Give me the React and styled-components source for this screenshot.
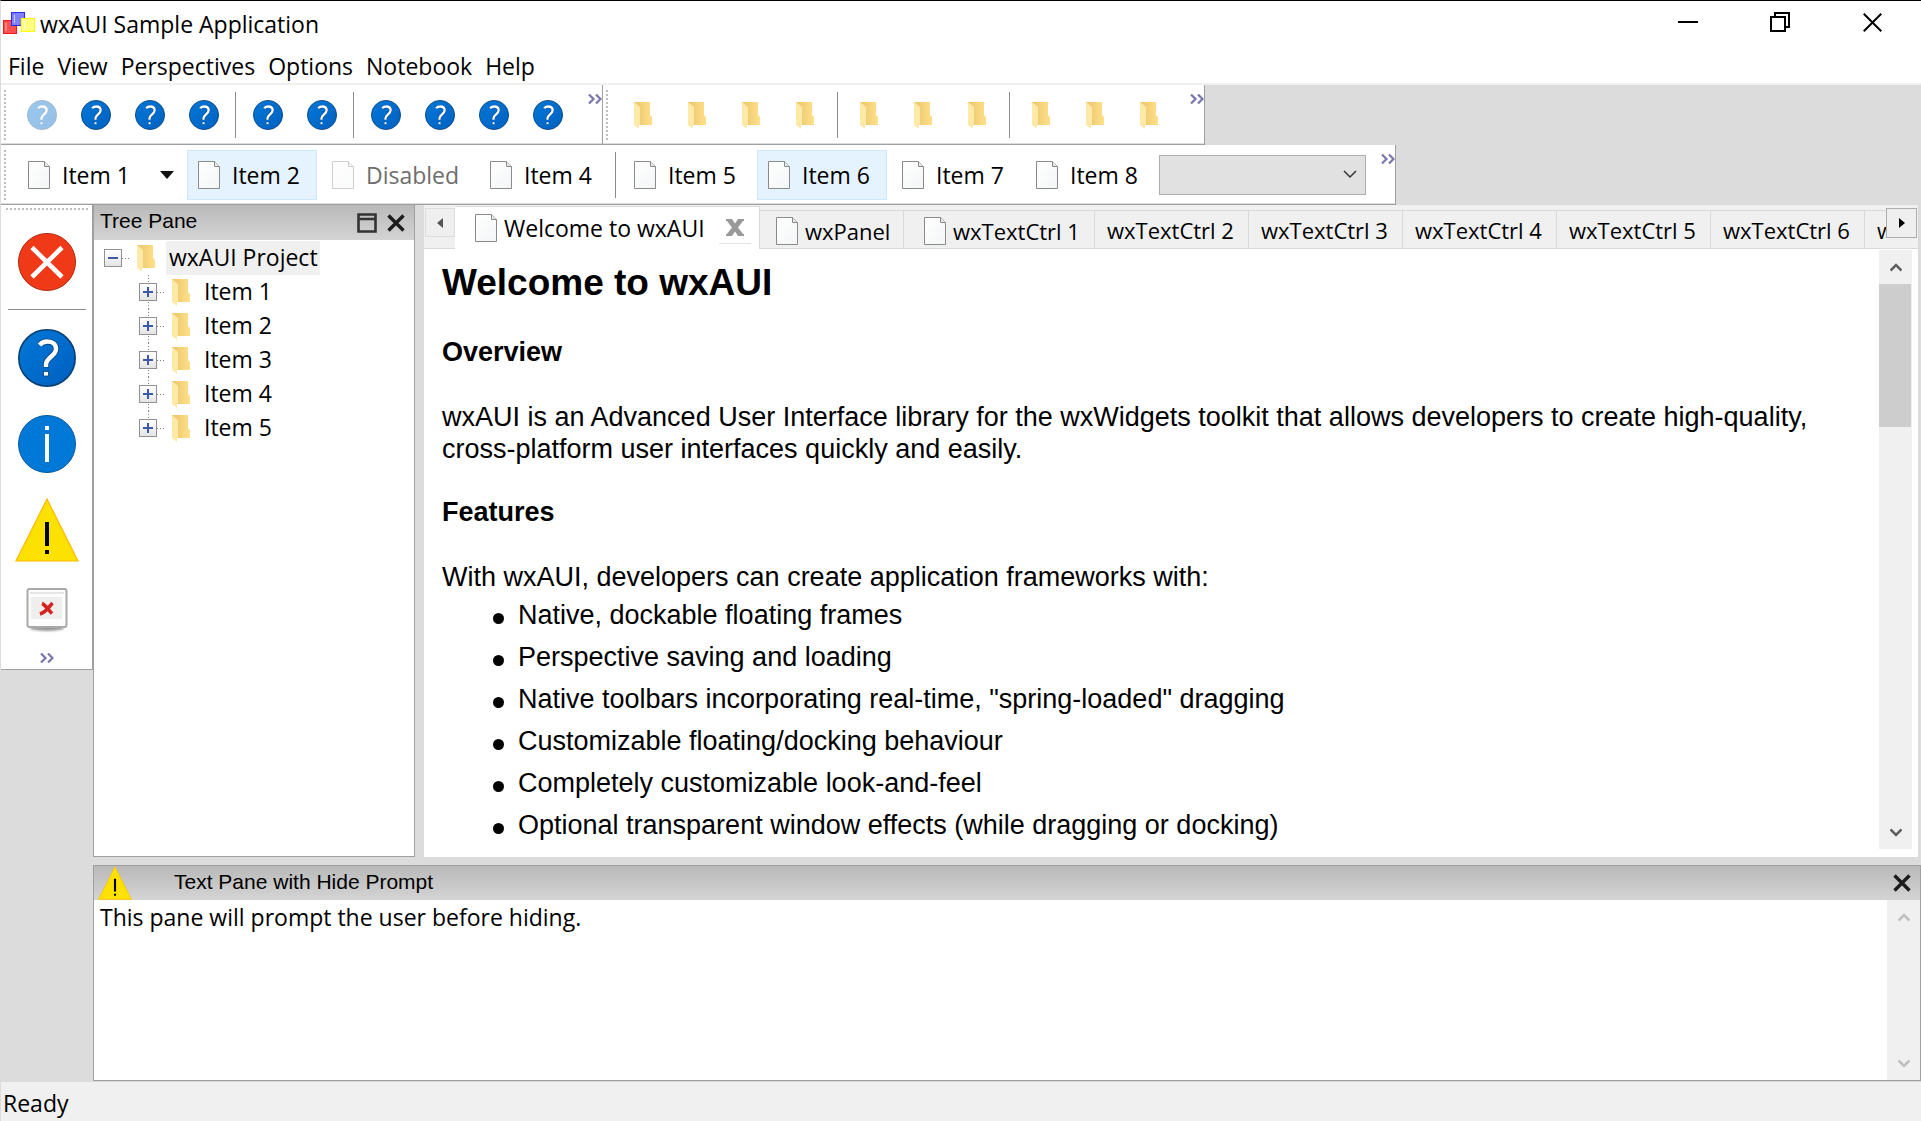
import React from "react";
import styled, { createGlobalStyle, css } from "styled-components";

const UI = `"Open Sans", "Noto Sans", sans-serif`;
const ARIAL = `"Liberation Sans", Arial, sans-serif`;

const GlobalStyle = createGlobalStyle`
  * { box-sizing: border-box; }
  body { margin: 0; background: #fff; color: #000; font-family: ${UI}; font-size: 23px; line-height: 32px; }
  button, select, textarea { font: inherit; color: inherit; }
  button { padding: 0; margin: 0; border: 0; background: none; }
  svg { display: block; flex: none; }
`;

const Window = styled.div`
  display: flex;
  flex-direction: column;
  height: 100vh;
  overflow: hidden;
  border-top: 1px solid #000;
  border-left: 1px solid #dcdcdc;
`;

const TitleBar = styled.header`
  display: flex;
  align-items: center;
  height: 48px;
  flex: none;
  padding: 0 3px 2px 2px;
`;

const AppTitle = styled.h1`
  margin: 0 0 0 4px;
  font-size: 23px;
  font-weight: 400;
  flex: 1;
`;

const CaptionButton = styled.button`
  display: flex;
  justify-content: center;
  width: 92px;
  height: 42px;
  align-self: flex-start;
  align-items: center;
`;

const MenuBar = styled.nav`
  display: flex;
  align-items: center;
  gap: 13px;
  height: 36px;
  flex: none;
  padding-left: 7px;
  border-bottom: 2px solid #f0f0f0;
`;

const DockRow = styled.div`
  display: flex;
  flex: none;
  height: 60px;
  background: #dcdcdc;
`;

const Toolbar = styled.div`
  display: flex;
  align-items: center;
  height: 60px;
  background: #fff;
  border-right: 1px solid #a0a0a0;
  border-bottom: 1px solid #a0a0a0;
  box-shadow: inset 0 -1px #dcdcdc;
`;

const Gripper = styled.span`
  width: 2px;
  height: 50px;
  margin: 0 ${(p) => (p.$wide ? 11 : 9)}px 0 3px;
  background: repeating-linear-gradient(#bebebe 0 2px, transparent 2px 4px);
`;

const ToolButton = styled.button`
  display: flex;
  align-items: center;
  justify-content: center;
  width: 54px;
  height: 50px;
  opacity: ${(p) => (p.disabled ? 0.4 : 1)};
`;

const Separator = styled.span`
  width: 1px;
  height: 46px;
  margin: 0 ${(p) => (p.$wide ? 7 : 5)}px 0 ${(p) => (p.$wide ? 6 : 4)}px;
  background: #8c8c8c;
`;

const Overflow = styled.button`
  display: flex;
  align-self: flex-start;
  justify-content: flex-end;
  padding-top: 9px;
  width: ${(p) => p.$width}px;
`;

const LabelButton = styled.button`
  display: flex;
  align-items: center;
  gap: 12px;
  height: 50px;
  width: ${(p) => p.$width || 130}px;
  margin-right: ${(p) => (p.$flush ? 0 : 4)}px;
  padding-left: 10px;
  padding-top: 1px;
  border: 1px solid transparent;
  ${(p) => p.$checked && css`
    background: #e5f3ff;
    border-color: #cce8ff;
  `}
  ${(p) => p.disabled && css`
    color: #6d6d6d;
    svg { opacity: 0.4; }
  `}
`;

const DropButton = styled.button`
  display: flex;
  align-items: center;
  justify-content: center;
  width: 40px;
  height: 50px;
`;

const ChoiceWrap = styled.label`
  display: grid;
  align-items: center;
  width: 207px;
  > * { grid-area: 1 / 1; }
  > svg { justify-self: end; margin-right: 9px; pointer-events: none; }
`;

const Choice = styled.select`
  appearance: none;
  width: 100%;
  height: 40px;
  border: 1px solid #adadad;
  border-radius: 0;
  background: #e1e1e1;
`;

const Body = styled.div`
  display: flex;
  flex: 1;
  min-height: 0;
  background: #dcdcdc;
`;

const SideBar = styled.div`
  display: flex;
  flex-direction: column;
  align-items: center;
  align-self: flex-start;
  width: 92px;
  background: #fff;
  border-right: 1px solid #a0a0a0;
  border-bottom: 1px solid #a0a0a0;
`;

const SideGripper = styled.span`
  width: 82px;
  height: 2px;
  margin: 3px 0 14px;
  background: repeating-linear-gradient(90deg, #bebebe 0 2px, transparent 2px 4px);
`;

const SideButton = styled.button`
  display: flex;
  align-items: center;
  justify-content: center;
  width: 78px;
  height: ${(p) => p.$height}px;
`;

const SideSeparator = styled.span`
  width: 78px;
  height: 1px;
  margin: 9px 0 5px;
  background: #8c8c8c;
`;

const Center = styled.main`
  display: flex;
  flex-direction: column;
  flex: 1;
  min-width: 0;
  gap: 8px;
`;

const Upper = styled.div`
  display: flex;
  flex: 1;
  min-height: 0;
  gap: 9px;
`;

const Pane = styled.section`
  display: flex;
  flex-direction: column;
  flex: none;
  background: #fff;
  border: 1px solid #a0a0a0;
  ${(p) => p.$width && css`width: ${p.$width}px; border-top-width: 0;`}
  ${(p) => p.$height && css`height: ${p.$height}px;`}
`;

const Caption = styled.header`
  display: flex;
  align-items: center;
  gap: 10px;
  height: ${(p) => (p.$tall ? 35 : 34)}px;
  flex: none;
  padding: 0 9px 0 ${(p) => (p.$tall ? 6 : 4)}px;
  background: linear-gradient(#b9b9b9, #d4d4d4);
`;

const CaptionText = styled.h2`
  flex: 1;
  margin: 0 0 3px ${(p) => (p.$indent ? 32 : 0)}px;
  font: 400 21px/30px ${ARIAL};
`;

const TreeList = styled.ul`
  list-style: none;
  margin: 0;
  padding: ${(p) => (p.$nested ? "0 0 0 35px" : "1px 0 0 10px")};
`;

const TreeRow = styled.div`
  display: flex;
  align-items: center;
  height: 34px;
  ${(p) => p.$child && css`
    background: repeating-linear-gradient(#808080 0 1px, transparent 1px 3px) 9px 0 / 1px ${p.$last ? "17px" : "100%"} no-repeat;
  `}
`;

const Expander = styled.button`
  display: flex;
  align-items: center;
  justify-content: center;
  width: 18px;
  height: 18px;
  border: 1px solid #919191;
  background: linear-gradient(#fff, #e4e4e4);
`;

const Dots = styled.span`
  width: 9px;
  height: 1px;
  margin-right: 6px;
  background: repeating-linear-gradient(90deg, #808080 0 1px, transparent 1px 3px);
`;

const TreeLabel = styled.span`
  height: 34px;
  margin-left: 9px;
  padding: 0 2px 0 3px;
  background: ${(p) => (p.$selected ? "#f0f0f0" : "transparent")};
`;

const Notebook = styled.section`
  display: flex;
  flex-direction: column;
  flex: 1;
  min-width: 0;
  margin-right: 2px;
  background: #fff;
  border-right: 1px solid #d9d9d9;
`;

const TabBar = styled.div`
  display: flex;
  flex: none;
  height: 44px;
  background: linear-gradient(#d9d9d9, #d9d9d9) 0 100% / 100% 1px no-repeat #f0f0f0;
`;

const ScrollTabs = styled.button`
  display: flex;
  align-items: center;
  justify-content: center;
  flex: none;
  width: ${(p) => (p.$end ? 31 : 30)}px;
  height: ${(p) => (p.$end ? 30 : 29)}px;
  margin: 3px ${(p) => (p.$end ? 1 : 0)}px 0 ${(p) => (p.$end ? 0 : 1)}px;
  border: 1px solid ${(p) => (p.$end ? "#adadad" : "#dcdcdc")};
  background: #efefef;
`;

const TabStrip = styled.div`
  display: flex;
  flex: 1;
  min-width: 0;
  overflow: hidden;
`;

const Tab = styled.div`
  display: flex;
  align-items: center;
  flex: none;
  width: ${(p) => p.$width}px;
  padding-left: ${(p) => p.$pad || 12}px;
  border: 1px solid #d9d9d9;
  border-width: 1px 1px 0 0;
  ${(p) => p.$active ? css`
    background: #fff;
    margin-top: 1px;
  ` : css`
    margin: 5px 0 1px;
    padding-top: ${p.$pad ? 2 : 0}px;
    font-size: 22px;
  `}
`;

const TabLabel = styled.button`
  display: flex;
  align-items: center;
  gap: 7px;
  white-space: nowrap;
`;

const CloseTab = styled.button`
  display: flex;
  justify-content: center;
  width: 32px;
  height: 32px;
  padding-top: 7px;
  margin-left: auto;
  margin-right: 8px;
  border-bottom: 1px solid #e4e4e4;
`;

const Page = styled.div`
  display: flex;
  flex: 1;
  min-height: 0;
  padding: 1px 6px 8px 0;
`;

const Html = styled.article`
  flex: 1;
  min-width: 0;
  overflow: hidden;
  padding: 11px 40px 0 18px;
  font: 400 27px/32px ${ARIAL};
`;

const Heading = styled.h2`
  margin: 0 0 31px;
  font-size: 37px;
  line-height: 44px;
`;

const SubHeading = styled.h3`
  margin: 0 0 33px;
  font-size: 27px;
  line-height: 32px;
`;

const Para = styled.p`
  margin: 0 0 ${(p) => (p.$tight ? 1 : 31)}px;
`;

const Features = styled.ul`
  list-style: none;
  margin: 0;
  padding: 0 0 0 51px;
`;

const Feature = styled.li`
  display: flex;
  align-items: center;
  gap: 14px;
  line-height: 42px;
  &::before {
    content: "";
    width: 11px;
    height: 11px;
    margin-top: 6px;
    border-radius: 50%;
    background: #000;
  }
`;

const ScrollTrack = styled.div`
  display: flex;
  flex-direction: column;
  flex: none;
  width: 33px;
  background: #f0f0f0;
  color: ${(p) => (p.$off ? "#bfbfbf" : "#606060")};
`;

const ScrollArrow = styled.button`
  display: flex;
  align-items: center;
  justify-content: center;
  width: 33px;
  height: 34px;
`;

const Thumb = styled.span`
  width: 32px;
  height: 143px;
  background: #cdcdcd;
`;

const Spring = styled.span`
  flex: 1;
`;

const TextRow = styled.div`
  display: flex;
  flex: 1;
  min-height: 0;
`;

const TextArea = styled.textarea`
  flex: 1;
  border: 0;
  outline: 0;
  resize: none;
  overflow: hidden;
  padding: 1px 6px;
`;

const StatusBar = styled.footer`
  flex: none;
  height: 40px;
  padding: 5px 2px 0;
  background: #f0f0f0;
  border-top: 1px solid #d9d9d9;
`;

const AppIcon = () => (
  <svg width="33" height="26" viewBox="0 0 33 26" aria-hidden="true">
    <rect x=".5" y="9.5" width="13" height="13" fill="#ff5050" stroke="#f01818" />
    <path d="M3 12v8" stroke="#ffb0b0" />
    <rect x="8.500" y="1.500" width="13" height="13" fill="#8080ff" stroke="#2a2af0" />
    <path d="M11.500 4v8" stroke="#c8c8ff" />
    <rect x="18.500" y="7.500" width="13" height="13" fill="#ffff80" stroke="#ffff00" />
    <path d="M21.500 10v8" stroke="#ffffd8" />
  </svg>
);

const QuestionIcon = ({ size }) => (
  <svg width={size} height={size} viewBox="0 0 58 58" aria-hidden="true">
    <defs>
      <linearGradient id={`q${size}`} x1="0" y1="0" x2="1" y2="1">
        <stop offset="0" stopColor="#0078d8" />
        <stop offset="1" stopColor="#0060c0" />
      </linearGradient>
    </defs>
    <circle cx="29" cy="29" r="28.200" fill={`url(#q${size})`} stroke="#0b3f73" strokeWidth="1.600" />
    <path d="M21.500 16c2-2.500 5-3.500 8-3.500c5 0 8.500 2.800 8.500 7.500c0 7-10 8.500-10 15.500v3" fill="none" stroke="#0b3f73" strokeWidth="6" />
    <path d="M21.500 16c2-2.500 5-3.500 8-3.500c5 0 8.500 2.800 8.500 7.500c0 7-10 8.500-10 15.500v2.500" fill="none" stroke="#fff" strokeWidth="4.500" />
    <rect x="25.500" y="42.500" width="5" height="4.500" fill="#fff" stroke="#0b3f73" strokeWidth=".8" />
  </svg>
);

const ErrorIcon = () => (
  <svg width="58" height="58" viewBox="0 0 58 58" aria-hidden="true">
    <circle cx="29" cy="29" r="28.500" fill="#f03a17" stroke="#b02a10" />
    <path d="M14 14.500 44 44M44 14.500 14 44" stroke="#fff" strokeWidth="4.600" />
  </svg>
);

const InfoIcon = () => (
  <svg width="58" height="58" viewBox="0 0 58 58" aria-hidden="true">
    <circle cx="29" cy="29" r="28.500" fill="#0078d7" stroke="#0a5a9e" />
    <path d="M27 11h4v4h-4zM27 19h4v28h-4z" fill="#fff" />
  </svg>
);

const WarningIcon = ({ size }) => (
  <svg width={size} height={size} viewBox="0 0 64 64" aria-hidden="true">
    <path d="M32 1 63 63H1z" fill="#fde100" stroke="#ffb900" strokeWidth="1.200" />
    <path d="M30 24h4v24h-4zM30 52h4v4h-4z" />
  </svg>
);

const MissingIcon = () => (
  <svg width="44" height="46" viewBox="0 0 44 46" aria-hidden="true">
    <defs>
      <filter id="soft" x="-20%" y="-20%" width="140%" height="140%"><feGaussianBlur stdDeviation="1" /></filter>
      <filter id="softer"><feGaussianBlur stdDeviation=".5" /></filter>
    </defs>
    <ellipse cx="22" cy="41" rx="17" ry="3" fill="#999" filter="url(#soft)" />
    <g filter="url(#softer)">
      <rect x="2.500" y="2" width="39" height="38" rx="2" fill="#fcfcfc" stroke="#a9a9a7" strokeWidth="2" />
      <rect x="6" y="10" width="31" height="22" fill="#eeeeec" />
      <path d="M5 6h34" stroke="#e6e6e6" strokeWidth="2" />
      <path d="M17 16.500c3 1 6 6 10 10M27.500 16c-3 3-6 9-12.500 11" fill="none" stroke="#d4201f" strokeWidth="3.600" />
    </g>
  </svg>
);

const FolderIcon = () => (
  <svg width="20" height="30" viewBox="0 -2 20 30" aria-hidden="true">
    <defs>
      <linearGradient id="folderBack" x1="0" y1="0" x2="1" y2="0">
        <stop offset="0" stopColor="#e9c56a" />
        <stop offset="1" stopColor="#ffe08a" />
      </linearGradient>
    </defs>
    <path d="M0 0h16v13l2 2v8H3z" fill="url(#folderBack)" />
    <path d="M0 0 6 5v17l-1 1v4L0 23z" fill="#ffe9a8" />
  </svg>
);

const PageIcon = () => (
  <svg width="22" height="28" viewBox="0 0 22 28" aria-hidden="true">
    <defs>
      <linearGradient id="sheet" x1="0" y1="0" x2="1" y2="1">
        <stop offset="0" stopColor="#fff" />
        <stop offset="1" stopColor="#f3f5f6" />
      </linearGradient>
    </defs>
    <path d="M.5.5h16l5 5v22H.5z" fill="url(#sheet)" stroke="#8a8a8a" />
    <path d="M16.500.5v5h5" fill="#e8e8e8" stroke="#8a8a8a" />
  </svg>
);

const MoreIcon = () => (
  <svg width="14" height="10" viewBox="0 0 14 10" aria-hidden="true">
    <path d="M1 .5 5.500 5 1 9.500M8 .5 12.500 5 8 9.500" fill="none" stroke="#7777ad" strokeWidth="2.200" />
  </svg>
);

const CrossIcon = ({ size = 18, width = 3.4, color = "#1c1c1c" }) => (
  <svg width={size} height={size} viewBox="0 0 18 18" aria-hidden="true">
    <path d="M1.500 1.500l15 15M16.500 1.500l-15 15" stroke={color} strokeWidth={width} />
  </svg>
);

const TabCrossIcon = () => (
  <svg width="18" height="17" viewBox="0 0 18 17" aria-hidden="true">
    <path d="M0 0h6l3 4.500L12 0h6v2h-1l-5 6.500 5 6.500h1v2h-6l-3-4.500L6 17H0v-2h1l5-6.500L1 2H0z" fill="#999" />
  </svg>
);

const MaximizeIcon = () => (
  <svg width="20" height="20" viewBox="0 0 20 20" aria-hidden="true">
    <path d="M1.500 1.500h17v17h-17zM1.500 6h17" fill="none" stroke="#333" strokeWidth="2.600" />
  </svg>
);

const ArrowIcon = ({ up }) => (
  <svg width="12" height="9" viewBox="0 0 12 9" aria-hidden="true">
    <path d={up ? "M.5 7.500 6 2l5.500 5.500" : "M.5 1.500 6 7l5.500-5.500"} fill="none" stroke="currentColor" strokeWidth="2.600" />
  </svg>
);

const BoxSign = ({ plus }) => (
  <svg width="12" height="12" viewBox="0 0 12 12" aria-hidden="true">
    <path d={plus ? "M1 6h10M6 1v10" : "M1 6h10"} stroke="#3d5aa8" strokeWidth="2" />
  </svg>
);

const IconGroup = ({ groups, icon, name }) =>
  groups.map((ids, g) => (
    <React.Fragment key={g}>
      {g > 0 && <Separator />}
      {ids.map((id) => (
        <ToolButton key={id} aria-label={`${name} ${id}`} disabled={name === "Help" && id === 1}>
          {icon}
        </ToolButton>
      ))}
    </React.Fragment>
  ));

const GROUPS = [[1, 2, 3, 4], [5, 6], [7, 8, 9, 10]];
const FOLDER_GROUPS = [[1, 2, 3, 4], [5, 6, 7], [8, 9, 10]];
const MENUS = ["File", "View", "Perspectives", "Options", "Notebook", "Help"];
const FEATURES = [
  "Native, dockable floating frames",
  "Perspective saving and loading",
  'Native toolbars incorporating real-time, "spring-loaded" dragging',
  "Customizable floating/docking behaviour",
  "Completely customizable look-and-feel",
  "Optional transparent window effects (while dragging or docking)",
];

const Item = ({ children, ...rest }) => (
  <LabelButton {...rest}>
    <PageIcon />
    {children}
  </LabelButton>
);

const ScrollBar = ({ off }) => (
  <ScrollTrack $off={off}>
    <ScrollArrow aria-label="Scroll up"><ArrowIcon up /></ScrollArrow>
    {!off && <Thumb />}
    <Spring />
    <ScrollArrow aria-label="Scroll down"><ArrowIcon /></ScrollArrow>
  </ScrollTrack>
);

export default function App() {
  return (
    <Window>
      <GlobalStyle />
      <TitleBar>
        <AppIcon />
        <AppTitle>wxAUI Sample Application</AppTitle>
        <CaptionButton aria-label="Minimize">
          <svg width="20" height="20"><path d="M0 10h20" stroke="#000" strokeWidth="2" /></svg>
        </CaptionButton>
        <CaptionButton aria-label="Restore">
          <svg width="20" height="20" fill="none" stroke="#000" strokeWidth="2">
            <path d="M1 5h14v14H1zM5 5V1h14v14h-4" />
          </svg>
        </CaptionButton>
        <CaptionButton aria-label="Close"><CrossIcon size={21} width={1.7} color="#000" /></CaptionButton>
      </TitleBar>
      <MenuBar aria-label="Menu">
        {MENUS.map((m) => <button key={m}>{m}</button>)}
      </MenuBar>
      <DockRow>
        <Toolbar role="toolbar">
          <Gripper />
          <IconGroup groups={GROUPS} name="Help" icon={<QuestionIcon size={30} />} />
          <Overflow $width={27} aria-label="More"><MoreIcon /></Overflow>
        </Toolbar>
        <Toolbar role="toolbar">
          <Gripper />
          <IconGroup groups={FOLDER_GROUPS} name="Folder" icon={<FolderIcon />} />
          <Overflow $width={27} aria-label="More"><MoreIcon /></Overflow>
        </Toolbar>
      </DockRow>
      <DockRow>
        <Toolbar role="toolbar">
          <Gripper $wide />
          <Item $flush>Item 1</Item>
          <DropButton aria-label="Item 1 menu">
            <svg width="14" height="8"><path d="M0 0h14L7 8z" fill="#111" /></svg>
          </DropButton>
          <Item $checked>Item 2</Item>
          <Item disabled $width={154}>Disabled</Item>
          <Item $flush>Item 4</Item>
          <Separator $wide />
          <Item>Item 5</Item>
          <Item $checked>Item 6</Item>
          <Item>Item 7</Item>
          <Item>Item 8</Item>
          <ChoiceWrap>
            <Choice aria-label="Choice" />
            <svg width="14" height="9"><path d="M1 1l6 6 6-6" fill="none" stroke="#333" strokeWidth="1.500" /></svg>
          </ChoiceWrap>
          <Overflow $width={29} aria-label="More"><MoreIcon /></Overflow>
        </Toolbar>
      </DockRow>
      <Body>
        <SideBar role="toolbar">
          <SideGripper />
          <SideButton $height={76} aria-label="Error"><ErrorIcon /></SideButton>
          <SideSeparator />
          <SideButton $height={86} aria-label="Question"><QuestionIcon size={58} /></SideButton>
          <SideButton $height={86} aria-label="Information"><InfoIcon /></SideButton>
          <SideButton $height={86} aria-label="Warning"><WarningIcon size={64} /></SideButton>
          <SideButton $height={74} aria-label="Missing image"><MissingIcon /></SideButton>
          <SideButton $height={22} aria-label="More"><MoreIcon /></SideButton>
        </SideBar>
        <Center>
          <Upper>
            <Pane $width={322}>
              <Caption $tall>
                <CaptionText>Tree Pane</CaptionText>
                <button aria-label="Maximize"><MaximizeIcon /></button>
                <button aria-label="Close Tree Pane"><CrossIcon /></button>
              </Caption>
              <TreeList>
                <li>
                  <TreeRow>
                    <Expander aria-label="Collapse"><BoxSign /></Expander>
                    <Dots />
                    <FolderIcon />
                    <TreeLabel $selected>wxAUI Project</TreeLabel>
                  </TreeRow>
                  <TreeList $nested>
                    {[1, 2, 3, 4, 5].map((n) => (
                      <li key={n}>
                        <TreeRow $child $last={n === 5}>
                          <Expander aria-label="Expand"><BoxSign plus /></Expander>
                          <Dots />
                          <FolderIcon />
                          <TreeLabel>Item {n}</TreeLabel>
                        </TreeRow>
                      </li>
                    ))}
                  </TreeList>
                </li>
              </TreeList>
            </Pane>
            <Notebook>
              <TabBar>
                <ScrollTabs aria-label="Previous tabs">
                  <svg width="6" height="10"><path d="M6 0v10L0 5z" fill="#555" /></svg>
                </ScrollTabs>
                <TabStrip>
                  <Tab $active $width={305} $pad={20}>
                    <TabLabel><PageIcon />Welcome to wxAUI</TabLabel>
                    <CloseTab aria-label="Close tab"><TabCrossIcon /></CloseTab>
                  </Tab>
                  <Tab $width={144} $pad={16}><TabLabel><PageIcon />wxPanel</TabLabel></Tab>
                  <Tab $width={191} $pad={20}><TabLabel><PageIcon />wxTextCtrl 1</TabLabel></Tab>
                  {[2, 3, 4, 5, 6, 7].map((n) => (
                    <Tab key={n} $width={154}><TabLabel>wxTextCtrl {n}</TabLabel></Tab>
                  ))}
                </TabStrip>
                <ScrollTabs $end aria-label="Next tabs">
                  <svg width="6" height="10"><path d="M0 0v10l6-5z" /></svg>
                </ScrollTabs>
              </TabBar>
              <Page>
                <Html>
                  <Heading>Welcome to wxAUI</Heading>
                  <SubHeading>Overview</SubHeading>
                  <Para>
                    wxAUI is an Advanced User Interface library for the wxWidgets toolkit that allows developers to create high-quality, cross-platform user interfaces quickly and easily.
                  </Para>
                  <SubHeading>Features</SubHeading>
                  <Para $tight>With wxAUI, developers can create application frameworks with:</Para>
                  <Features>
                    {FEATURES.map((f) => <Feature key={f}>{f}</Feature>)}
                  </Features>
                </Html>
                <ScrollBar />
              </Page>
            </Notebook>
          </Upper>
          <Pane $height={216}>
            <Caption>
              <WarningIcon size={34} />
              <CaptionText $indent>Text Pane with Hide Prompt</CaptionText>
              <button aria-label="Close Text Pane"><CrossIcon /></button>
            </Caption>
            <TextRow>
              <TextArea aria-label="Text pane" defaultValue="This pane will prompt the user before hiding." />
              <ScrollBar off />
            </TextRow>
          </Pane>
        </Center>
      </Body>
      <StatusBar>Ready</StatusBar>
    </Window>
  );
}
